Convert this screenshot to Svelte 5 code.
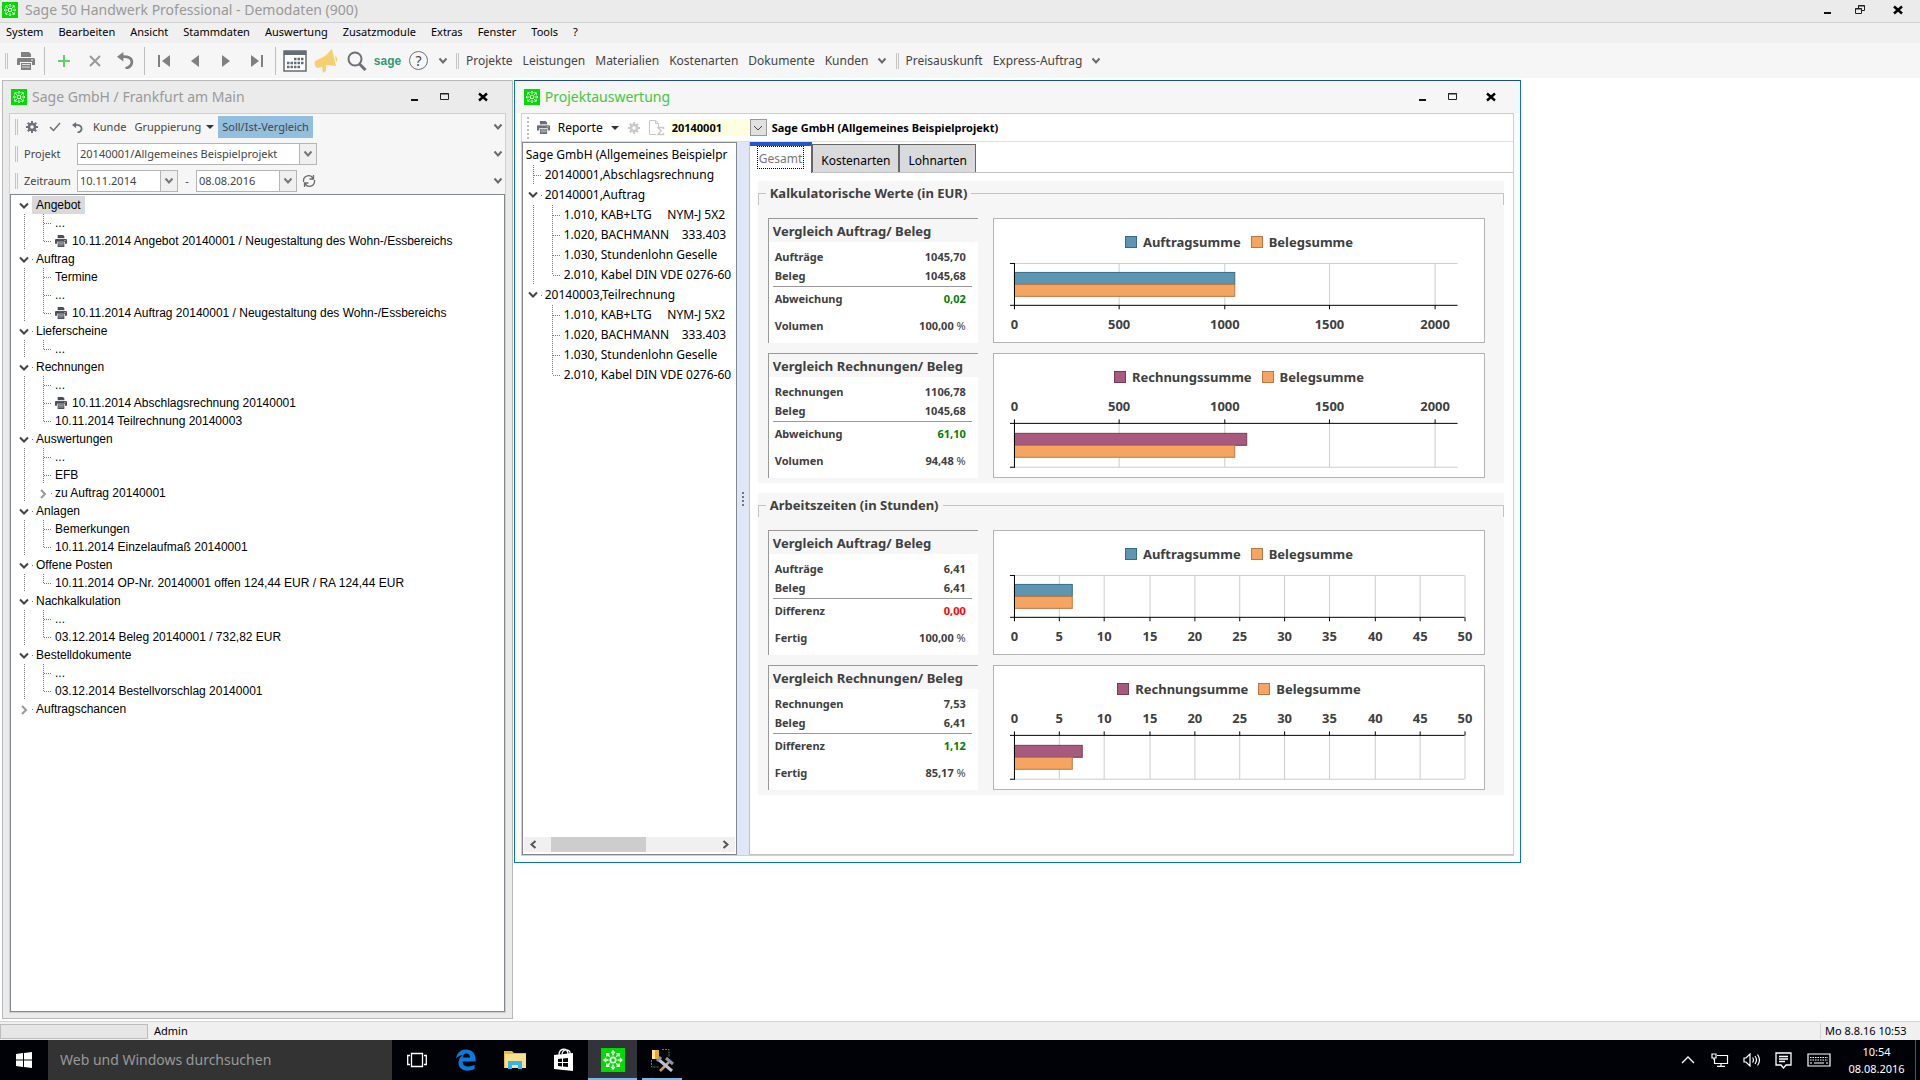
<script lang="ts">
  type Row = { depth: number; text: string; icon?: boolean; node?: 'open' | 'closed'; last?: boolean; selected?: boolean; rail?: boolean };

  const menu = ['System', 'Bearbeiten', 'Ansicht', 'Stammdaten', 'Auswertung', 'Zusatzmodule', 'Extras', 'Fenster', 'Tools', '?'];
  const modules = ['Projekte', 'Leistungen', 'Materialien', 'Kostenarten', 'Dokumente', 'Kunden'];

  const documents: Row[] = [
    { depth: 1, text: 'Angebot', node: 'open', selected: true },
    { depth: 2, text: '...' },
    { depth: 2, text: '10.11.2014 Angebot 20140001 / Neugestaltung des Wohn-/Essbereichs', icon: true, last: true },
    { depth: 1, text: 'Auftrag', node: 'open' },
    { depth: 2, text: 'Termine' },
    { depth: 2, text: '...' },
    { depth: 2, text: '10.11.2014 Auftrag 20140001 / Neugestaltung des Wohn-/Essbereichs', icon: true, last: true },
    { depth: 1, text: 'Lieferscheine', node: 'open' },
    { depth: 2, text: '...', last: true },
    { depth: 1, text: 'Rechnungen', node: 'open' },
    { depth: 2, text: '...' },
    { depth: 2, text: '10.11.2014 Abschlagsrechnung 20140001', icon: true },
    { depth: 2, text: '10.11.2014 Teilrechnung 20140003', last: true },
    { depth: 1, text: 'Auswertungen', node: 'open' },
    { depth: 2, text: '...' },
    { depth: 2, text: 'EFB' },
    { depth: 2, text: 'zu Auftrag 20140001', node: 'closed', last: true },
    { depth: 1, text: 'Anlagen', node: 'open' },
    { depth: 2, text: 'Bemerkungen' },
    { depth: 2, text: '10.11.2014 Einzelaufmaß 20140001', last: true },
    { depth: 1, text: 'Offene Posten', node: 'open' },
    { depth: 2, text: '10.11.2014 OP-Nr. 20140001 offen 124,44 EUR / RA 124,44 EUR', last: true },
    { depth: 1, text: 'Nachkalkulation', node: 'open' },
    { depth: 2, text: '...' },
    { depth: 2, text: '03.12.2014 Beleg 20140001 / 732,82 EUR', last: true },
    { depth: 1, text: 'Bestelldokumente', node: 'open' },
    { depth: 2, text: '...' },
    { depth: 2, text: '03.12.2014 Bestellvorschlag 20140001', last: true },
    { depth: 1, text: 'Auftragschancen', node: 'closed' },
  ];

  const positions: Row[] = [
    { depth: 0, text: 'Sage GmbH (Allgemeines Beispielpr' },
    { depth: 1, text: '20140001,Abschlagsrechnung' },
    { depth: 1, text: '20140001,Auftrag', node: 'open' },
    { depth: 2, text: '1.010, KAB+LTG     NYM-J 5X2' },
    { depth: 2, text: '1.020, BACHMANN    333.403' },
    { depth: 2, text: '1.030, Stundenlohn Geselle' },
    { depth: 2, text: '2.010, Kabel DIN VDE 0276-60', last: true },
    { depth: 1, text: '20140003,Teilrechnung', node: 'open' },
    { depth: 2, text: '1.010, KAB+LTG     NYM-J 5X2', rail: false },
    { depth: 2, text: '1.020, BACHMANN    333.403', rail: false },
    { depth: 2, text: '1.030, Stundenlohn Geselle', rail: false },
    { depth: 2, text: '2.010, Kabel DIN VDE 0276-60', last: true, rail: false },
  ];

  const eur = { end: 2110, width: 445, ticks: [0, 500, 1000, 1500, 2000] };
  const hours = { end: 50, width: 452, ticks: [0, 5, 10, 15, 20, 25, 30, 35, 40, 45, 50] };

  const groups = [
    {
      title: 'Kalkulatorische Werte (in EUR)',
      scale: eur,
      cards: [
        { title: 'Vergleich Auftrag/ Beleg', rows: [['Aufträge', '1045,70'], ['Beleg', '1045,68'], ['Abweichung', '0,02'], ['Volumen', '100,00']], tone: 'good', series: 'Auftragsumme', values: [1045.7, 1045.68], top: false },
        { title: 'Vergleich Rechnungen/ Beleg', rows: [['Rechnungen', '1106,78'], ['Beleg', '1045,68'], ['Abweichung', '61,10'], ['Volumen', '94,48']], tone: 'good', series: 'Rechnungssumme', values: [1106.78, 1045.68], top: true },
      ],
    },
    {
      title: 'Arbeitszeiten (in Stunden)',
      scale: hours,
      cards: [
        { title: 'Vergleich Auftrag/ Beleg', rows: [['Aufträge', '6,41'], ['Beleg', '6,41'], ['Differenz', '0,00'], ['Fertig', '100,00']], tone: 'bad', series: 'Auftragsumme', values: [6.41, 6.41], top: false },
        { title: 'Vergleich Rechnungen/ Beleg', rows: [['Rechnungen', '7,53'], ['Beleg', '6,41'], ['Differenz', '1,12'], ['Fertig', '85,17']], tone: 'good', series: 'Rechnungsumme', values: [7.53, 6.41], top: true },
      ],
    },
  ];

  let tab = $state('Gesamt');
</script>

{#snippet logo(size: number)}
  <svg width={size} height={size} viewBox="0 0 16 16" aria-hidden="true">
    <rect width="16" height="16" fill="#00dc00" />
    <g fill="none" stroke="#fff">
      <circle cx="8" cy="8" r="1.8" stroke-width="1.1" />
      {#each [0, 45, 90, 135, 180, 225, 270, 315] as a}
        <path d="M8 5V2.2M6.7 3.4L8 2l1.3 1.4" stroke-width=".9" transform="rotate({a} 8 8)" />
      {/each}
    </g>
  </svg>
{/snippet}

{#snippet printer(size: number, color: string)}
  <svg width={size} height={size} viewBox="0 0 18 18" aria-hidden="true" fill={color}>
    <path d="M4 0h8l2 2v3H4zM1 6h16l1 1v6h-3v-3H3v3H0V7zM4 11h10v7H4z" />
    <path d="M5 12.5h8M5 15h8M5 5.5h8" stroke="#f6f6f6" stroke-width=".8" />
    <circle cx="15" cy="8" r=".8" fill="#fff" />
  </svg>
{/snippet}

{#snippet chevron(color = '#6b6b6b')}
  <svg width="10" height="8" viewBox="0 0 10 8" aria-hidden="true"><path d="M1.5 1.5L5 5.5l3.5-4" fill="none" stroke={color} stroke-width="2" /></svg>
{/snippet}

{#snippet gear(color: string)}
  <svg width="12" height="12" viewBox="0 0 12 12" aria-hidden="true">
    <circle cx="6" cy="6" r="3" fill="none" stroke={color} stroke-width="2.4" />
    {#each [0, 45, 90, 135, 180, 225, 270, 315] as a}
      <path d="M6 0v2.5" stroke={color} stroke-width="2" transform="rotate({a} 6 6)" />
    {/each}
  </svg>
{/snippet}

{#snippet undo(size: number, color: string)}
  <svg width={size} height={size} viewBox="0 0 16 16" aria-hidden="true">
    <path d="M6 0v9L0 4.5z" fill={color} />
    <path d="M4 4.5c6-.8 10 1 10 5 0 3-2 5-6 6" fill="none" stroke={color} stroke-width="2.6" />
  </svg>
{/snippet}

{#snippet windowButtons(restore = false)}
  <div class="controls" class:wide={restore}>
    <button aria-label="Minimieren"><svg width="12" height="12"><path d="M3 9h7" stroke="#111" stroke-width="2" /></svg></button>
    <button aria-label="Maximieren">
      <svg width="12" height="12" fill="none" stroke="#222">
        {#if restore}
          <path d="M4.500 4V1.500h6v5H8M4 2h7M1.500 4.500h6v5h-6zM1 5h7" />
        {:else}
          <path d="M1.500 2.500h8v6h-8zM1 3h9" />
        {/if}
      </svg>
    </button>
    <button aria-label="Schließen"><svg width="12" height="12"><path d="M2 2.500l8 7M10 2.500l-8 7" stroke="#000" stroke-width="2.400" /></svg></button>
  </div>
{/snippet}

{#snippet tree(rows: Row[])}
  {#each rows as row}
    <li>
      {#if row.depth === 2}
        <svg class="guide">
          {#if row.rail !== false}<line x1="7.5" x2="7.5" y1="0" y2="100%" />{/if}
        </svg>
      {/if}
      {#if row.node}
        <svg class="guide">
          {#if row.node === 'open'}
            <path class="open" d="M3 7.5l4 4 4-4" />
          {:else}
            <path class="closed" d="M5 6l4 4-4 4" />
          {/if}
          <line x1="15" x2="16" y1="50%" y2="50%" />
        </svg>
      {:else if row.depth > 0}
        <svg class="guide">
          <line x1="7.5" x2="7.5" y1="0" y2={row.last ? '50%' : '100%'} />
          <line x1="8" x2="16" y1="50%" y2="50%" />
        </svg>
      {/if}
      {#if row.icon}<span class="doc">{@render printer(12, '#4a4f59')}</span>{/if}
      <span class:selected={row.selected}>{row.text}</span>
    </li>
  {/each}
{/snippet}

<div class="screen">
  <header class="app-title">
    {@render logo(16)}
    <h1>Sage 50 Handwerk Professional - Demodaten (900)</h1>
    {@render windowButtons(true)}
  </header>

  <nav class="menu">
    {#each menu as item}<button>{item}</button>{/each}
  </nav>

  <div class="toolbar">
    <span class="grip"></span>
    <button class="tool" aria-label="Drucken">{@render printer(18, '#808080')}</button>
    <span class="sep"></span>
    <button class="tool" aria-label="Neu"><svg width="14" height="14"><path d="M7 1v12M1 7h12" stroke="#5fd068" stroke-width="2" /></svg></button>
    <button class="tool" aria-label="Löschen"><svg width="12" height="12"><path d="M1 1l10 10M11 1L1 11" stroke="#9a9a9a" stroke-width="2" /></svg></button>
    <button class="tool" aria-label="Rückgängig">{@render undo(17, '#808080')}</button>
    <span class="sep"></span>
    <button class="tool" aria-label="Erster"><svg width="14" height="14" fill="#808080"><path d="M1 1h2v12H1zM13 1v12L5 7z" /></svg></button>
    <button class="tool" aria-label="Zurück"><svg width="14" height="14" fill="#808080"><path d="M11 1v12L3 7z" /></svg></button>
    <button class="tool" aria-label="Weiter"><svg width="14" height="14" fill="#808080"><path d="M3 1v12l8-6z" /></svg></button>
    <button class="tool" aria-label="Letzter"><svg width="14" height="14" fill="#808080"><path d="M1 1v12l8-6zM11 1h2v12h-2z" /></svg></button>
    <span class="sep"></span>
    <button class="tool" aria-label="Kalender">
      <svg width="24" height="22" viewBox="0 0 24 22">
        <path d="M1 1h22v20H1z" fill="#fff" stroke="#666c76" stroke-width="1.5" />
        <path d="M1 1h22v4H1z" fill="#666c76" />
        <path d="M11 9h10M4 13h17M4 17h13" stroke="#666c76" stroke-width="2.5" stroke-dasharray="2.5 1" />
      </svg>
    </button>
    <button class="tool" aria-label="Hinweise">
      <svg width="24" height="24" viewBox="0 0 24 24" fill="#f6cf73">
        <path d="M1 12l10-5 7-7 4 17-9-1-9 3c-3 0-4-5-3-7z" />
        <path d="M8 17l4-1v6l-3 2zM21 7c3 1 3 5 1 6z" />
      </svg>
    </button>
    <button class="tool" aria-label="Suchen"><svg width="20" height="20" fill="none" stroke="#6d6f7a"><circle cx="8" cy="8" r="6.5" stroke-width="2" /><path d="M12.5 13l6 6" stroke-width="3" /></svg></button>
    <button class="tool sage">sage</button>
    <button class="tool" aria-label="Hilfe"><span class="help">?</span></button>
    <button class="more" aria-label="Mehr">{@render chevron()}</button>
    <span class="grip second"></span>
    {#each modules as item}<button class="word">{item}</button>{/each}
    <button class="more" aria-label="Mehr">{@render chevron()}</button>
    <span class="grip second"></span>
    <button class="word">Preisauskunft</button>
    <button class="word">Express-Auftrag</button>
    <button class="more" aria-label="Mehr">{@render chevron()}</button>
  </div>

  <main class="workspace">
    <section class="window project">
      <header class="window-title">
        {@render logo(16)}
        <h2>Sage GmbH / Frankfurt am Main</h2>
        {@render windowButtons()}
      </header>
      <div class="panel">
        <div class="bar first">
          <span class="grip"></span>
          <button class="mini" aria-label="Einstellungen">{@render gear('#6b6f78')}</button>
          <button class="mini" aria-label="Übernehmen"><svg width="12" height="10"><path d="M1 5l3.500 3.500L11 1" fill="none" stroke="#6b6f78" stroke-width="1.5" /></svg></button>
          <button class="mini" aria-label="Rückgängig">{@render undo(11, '#6b6f78')}</button>
          <button class="text">Kunde</button>
          <button class="text">Gruppierung <i class="caret"></i></button>
          <button class="text active">Soll/Ist-Vergleich</button>
          <span class="end">{@render chevron()}</span>
        </div>
        <div class="bar">
          <span class="grip"></span>
          <label class="field" for="projekt">Projekt</label>
          <span class="combo long">
            <select id="projekt"><option>20140001/Allgemeines Beispielprojekt</option></select>
            <span class="drop">{@render chevron('#777')}</span>
          </span>
          <span class="end">{@render chevron()}</span>
        </div>
        <div class="bar">
          <span class="grip"></span>
          <label class="field" for="von">Zeitraum</label>
          <span class="combo">
            <input id="von" value="10.11.2014" />
            <button class="drop" aria-label="Kalender von">{@render chevron('#777')}</button>
          </span>
          <span class="dash">-</span>
          <span class="combo">
            <input aria-label="Zeitraum bis" value="08.08.2016" />
            <button class="drop" aria-label="Kalender bis">{@render chevron('#777')}</button>
          </span>
          <button class="mini" aria-label="Aktualisieren">
            <svg width="14" height="14" fill="none" stroke="#6b6b6b" stroke-width="1.3"><path d="M1.500 8V6.500a5 5 0 0 1 9.500-2M11.500 1v4h-4M12.500 6v1.500a5 5 0 0 1-9.500 2M2.500 13V9h4" /></svg>
          </button>
          <span class="end">{@render chevron()}</span>
        </div>
        <ul class="tree documents">{@render tree(documents)}</ul>
      </div>
    </section>

    <section class="window report">
      <header class="window-title">
        {@render logo(16)}
        <h2>Projektauswertung</h2>
        {@render windowButtons()}
      </header>
      <div class="panel">
        <div class="report-bar">
          <span class="dots"></span>
          <button class="print">{@render printer(13, '#6b6f78')} Reporte <i class="caret"></i></button>
          <button class="mini" aria-label="Einstellungen">{@render gear('#c9c9c9')}</button>
          <button class="mini sum" aria-label="Summen">
            <svg width="16" height="16" fill="none" stroke="#c9c9c9"><path d="M7 14.500H.5V.5h6l3 3V7M6.500.5v3h3" /><path d="M14.500 9V7.500H9l3 3.500-3 3.500h5.500V13" stroke-width="1.5" /></svg>
          </button>
          <input class="number" aria-label="Projektnummer" value="20140001" />
          <button class="pick" aria-label="Projekt wählen"><svg width="10" height="8"><path d="M1 2l4 4 4-4" fill="none" stroke="#444" /></svg></button>
          <strong>Sage GmbH (Allgemeines Beispielprojekt)</strong>
        </div>
        <div class="split">
          <div class="positions-box">
            <ul class="tree positions">{@render tree(positions)}</ul>
            <div class="scroll">
              <svg width="8" height="9"><path d="M6.500 1L2.500 4.500l4 3.500" fill="none" stroke="#555" stroke-width="2" /></svg>
              <span class="track"><span class="thumb"></span></span>
              <svg width="8" height="9"><path d="M1.500 1l4 3.500-4 3.500" fill="none" stroke="#555" stroke-width="2" /></svg>
            </div>
          </div>
          <div class="splitter"><span></span></div>
          <div class="content">
            <div class="tabs" role="tablist">
              {#each ['Gesamt', 'Kostenarten', 'Lohnarten'] as name}
                <button role="tab" aria-selected={tab === name} class:current={tab === name} onclick={() => (tab = name)}><span>{name}</span></button>
              {/each}
            </div>
            <div class="groups">
              {#each groups as group}
                {@const px = group.scale.width / group.scale.end}
                <section class="group">
                  <div class="group-title"><i class="left"></i><h3>{group.title}</h3><i class="right"></i></div>
                  {#each group.cards as card}
                    {@const axis = (card.top ? 39 : 56) + 0.5}
                    {@const far = (card.top ? 83 : 14) + 0.5}
                    {@const bar = (card.top ? 49 : 23) + 0.5}
                    <div class="compare">
                      <div class="card">
                        <h4>{card.title}</h4>
                        <table>
                          <tbody>
                            {#each card.rows as [name, value], i}
                              <tr>
                                <th scope="row">{name}</th>
                                <td class={i === 2 ? card.tone : ''}>{value}{#if i === 3}<span class="percent">&nbsp;%</span>{/if}</td>
                              </tr>
                            {/each}
                          </tbody>
                        </table>
                      </div>
                      <figure>
                        <figcaption>
                          <span class={card.top ? 'key plum' : 'key blue'}></span>{card.series}
                          <span class="key orange"></span>Belegsumme
                        </figcaption>
                        <svg class="plot" viewBox="0 0 492 93">
                          <path class="grid" d="M20 {far}H{20 + group.scale.width}" />
                          {#each group.scale.ticks as t}
                            {@const x = Math.round(20 + t * px) + 0.5}
                            {#if t > 0}<path class="grid" d="M{x} {far}V{axis}" />{/if}
                            <path class="axis" d="M{x} {axis}v{card.top ? -4 : 4}" />
                            <text {x} y={card.top ? 27 : 80}>{t}</text>
                          {/each}
                          <rect class={card.top ? 'plum' : 'blue'} x="20.5" y={bar} width={Math.round(card.values[0] * px)} height="12" />
                          <rect class="orange" x="20.5" y={bar + 12} width={Math.round(card.values[1] * px)} height="12" />
                          <path class="axis" d="M16 {axis}H{20 + group.scale.width}M20.5 {far}V{axis}M16 {far}h5" />
                        </svg>
                      </figure>
                    </div>
                  {/each}
                </section>
              {/each}
            </div>
          </div>
        </div>
      </div>
    </section>
  </main>

  <footer class="status">
    <span class="progress"></span>
    <span>Admin</span>
    <span class="time">Mo 8.8.16 10:53</span>
  </footer>

  <div class="taskbar">
    <button class="start" aria-label="Start"><svg width="16" height="16" fill="#fff"><path d="M0 2l7-1v6.500H0zM8 .9L16 0v7.500H8zM0 8.500h7V15l-7-1zM8 8.500h8V16l-8-1z" /></svg></button>
    <input class="search" aria-label="Suche" placeholder="Web und Windows durchsuchen" />
    <button class="app" aria-label="Taskansicht"><svg width="20" height="16" fill="none" stroke="#fff" stroke-width="1.3"><path d="M4.500 1.500h11v13h-11zM3 3.500H.7v9H3M17 3.500h2.300v9H17" /></svg></button>
    <button class="app" aria-label="Edge">
      <svg width="22" height="22" viewBox="0 0 22 22" fill="#0a7bdc"><path d="M1 9.500C2 3.500 6 .5 11 .5c6 0 9.500 4 9.500 9.500v2.500H7.500c0 3 2.500 5 6 5 2.300 0 4.300-.6 6-1.700v4.300c-2 1.100-4.500 1.700-7 1.700-6 0-9-3.700-9-8 0-3.500 2-6.500 5-7.800C6 6 3 7 1 9.500zm6.700-1h7.300C15 6 13.500 4.500 11.300 4.500 9.300 4.500 8 6 7.700 8.500z" /></svg>
    </button>
    <button class="app" aria-label="Explorer">
      <svg width="22" height="20" viewBox="0 0 22 20"><path d="M0 1h8l2 2h12v15H0z" fill="#e8b93f" /><path d="M1 4h21v14H1z" fill="#fbe08f" /><path d="M4 11h14v8h-4v-4H8v4H4z" fill="#35b6e8" /></svg>
    </button>
    <button class="app" aria-label="Store">
      <svg width="22" height="24" viewBox="0 0 22 24"><path d="M1 7l19-2v18L1 21z" fill="#fff" /><path d="M6 7c0-7 9-8 9-1M9 6c1-6 9-5 8 0" fill="none" stroke="#fff" stroke-width="1.3" /><path d="M5 11l4-.4V14H5zM10 10.500l5-.5v4h-5zM5 15h4v3.500L5 18zM10 15h5v4l-5-.5z" fill="#000208" /></svg>
    </button>
    <button class="app running" aria-label="Sage 50">{@render logo(24)}</button>
    <button class="app open" aria-label="Werkzeuge">
      <svg width="24" height="24" viewBox="0 0 24 24">
        <path d="M2 2h7v9H2z" fill="#e9a92b" /><path d="M2 2h3v9H2z" fill="#ffe58a" />
        <path d="M12 1.500h7v7M1.500 12v7H9" fill="none" stroke="#3f9a3f" stroke-dasharray="2 1" />
        <path d="M10 23l10-10" stroke="#d29a5b" stroke-width="2.5" /><path d="M8 11l14 12" stroke="#b9c3d3" stroke-width="3" /><path d="M16 10l7 6M7 13l4-4" stroke="#8894a8" stroke-width="3" />
      </svg>
    </button>
    <div class="tray">
      <button aria-label="Ausgeblendete Symbole"><svg width="14" height="8"><path d="M1 7l6-6 6 6" fill="none" stroke="#fff" stroke-width="1.3" /></svg></button>
      <button aria-label="Netzwerk"><svg width="18" height="14" fill="none" stroke="#fff" stroke-width="1.2"><path d="M6 2.500h10.500v8H3.500V6M10 10.500V13M6 13.400h8M1 1h4v4H1zM3 5v2" /></svg></button>
      <button aria-label="Lautstärke"><svg width="18" height="14" fill="none" stroke="#fff" stroke-width="1.2"><path d="M1 5h2l4-4v12L3 9H1zM9.500 4.500q2 2.500 0 5M12 3q3 4 0 8M14.500 1.500q4 5.500 0 11" /></svg></button>
      <button aria-label="Info-Center"><svg width="18" height="17" fill="none" stroke="#fff" stroke-width="1.3"><path d="M1 1h15v12h-5l-2.500 3L6 13H1zM4 4.500h9M4 7h9M4 9.500h6" /></svg></button>
      <button class="keys" aria-label="Tastatur"><svg width="24" height="14" fill="none" stroke="#fff" stroke-width="1.2"><path d="M1 1h22v12H1z" /><path d="M3 4.500h18M3 7h18" stroke-dasharray="1.5 1" /><path d="M3 10h2M7 10h10M19 10h2" /></svg></button>
      <time>10:54<br />08.08.2016</time>
    </div>
  </div>
</div>

<style>
  :global(body) {
    margin: 0;
    background: #fff;
  }

  .screen {
    --ui: 'Noto Sans', 'Open Sans', sans-serif;
    display: flex;
    flex-direction: column;
    min-height: 100vh;
    font: 11px/16px var(--ui);
    color: #000;
  }

  .screen *,
  .screen {
    box-sizing: border-box;
  }

  button,
  input,
  select {
    margin: 0;
    padding: 0;
    border: 0;
    border-radius: 0;
    background: none;
    font: inherit;
    color: inherit;
    outline: none;
  }

  h1, h2, h3, h4, figure, ul {
    margin: 0;
    padding: 0;
  }

  svg {
    display: block;
    flex: none;
  }

  /* frame */
  .app-title {
    display: flex;
    align-items: center;
    gap: 7px;
    height: 23px;
    padding-left: 2px;
    padding-bottom: 3px;
    background: #ebebeb;
    border-bottom: 1px solid #d2d2d2;
  }

  h1, h2 {
    font-size: 14px;
    line-height: 18px;
    font-weight: 400;
    color: #999;
    white-space: nowrap;
  }

  .controls {
    display: flex;
    margin-left: auto;
  }

  .controls button {
    width: 34px;
    height: 20px;
    display: grid;
    place-items: center;
  }

  .controls button:first-child {
    width: 28px;
  }

  .controls button:last-child {
    width: 42px;
  }

  .controls.wide {
    padding-right: 3px;
  }

  .controls.wide button {
    width: 38px;
  }

  .controls.wide button:first-child {
    width: 28px;
  }

  .menu {
    display: flex;
    gap: 15px;
    height: 20px;
    padding: 0 0 2px 6px;
    background: #f0f0f0;
  }

  .toolbar {
    display: flex;
    align-items: center;
    height: 35px;
    padding-left: 5px;
    background: #f6f6f6;
    color: #444;
    font-size: 12px;
  }

  .grip {
    width: 3px;
    height: 16px;
    margin-right: 2px;
    border: solid #c4c4c4;
    border-width: 0 1px;
    flex: none;
  }

  .grip.second {
    margin-left: 5px;
  }

  .tool {
    width: 31px;
    display: grid;
    place-items: center;
  }

  .sep {
    width: 1px;
    height: 28px;
    margin: 0 3px;
    background: #bdbdbd;
  }

  .sage {
    font: bold 12px/16px 'Liberation Sans', sans-serif;
    color: #2e9a72;
  }

  .help {
    width: 19px;
    height: 19px;
    border: 1px solid #6b6f78;
    border-radius: 50%;
    line-height: 17px;
    font-size: 14px;
    text-align: center;
  }

  .more {
    width: 17px;
    display: grid;
    place-items: center;
  }

  .word {
    padding: 0 5px;
  }

  /* child windows */
  .workspace {
    flex: 1;
    display: grid;
    grid-template-columns: 511fr 1008fr 398fr;
    column-gap: 1px;
    padding: 2px 0 2px 2px;
  }

  .window {
    display: flex;
    flex-direction: column;
    min-width: 0;
  }

  .project {
    background: #ebebeb;
    border: 1px solid #b9b9b9;
    padding: 0 6px 5px;
  }

  .report {
    margin-bottom: 156px;
    padding: 0 6px 6px;
    background: #fcfcfc;
    border: 1px solid #0a74be;
    border-top-color: #1e4a90;
  }

  .report .window-title {
    margin: 0 -6px;
    padding-left: 9px;
    background: #f6f6f6;
  }

  .report h2 {
    color: #3fc93f;
  }

  .window-title {
    display: flex;
    align-items: center;
    gap: 5px;
    height: 32px;
    padding-left: 2px;
  }

  .report .controls {
    padding-right: 8px;
  }

  .project .controls {
    padding-right: 2px;
  }

  .panel {
    flex: 1;
    display: flex;
    flex-direction: column;
    border: 1px solid #cfcfcf;
    background: #f6f6f6;
    min-width: 0;
  }

  .bar {
    display: flex;
    align-items: center;
    height: 27px;
    padding-left: 5px;
    color: #444;
  }

  .bar.first {
    height: 26px;
  }

  .mini {
    width: 23px;
    display: grid;
    place-items: center;
  }

  .text {
    display: flex;
    align-items: center;
    height: 22px;
    padding: 0 4px;
    white-space: nowrap;
  }

  .active {
    background: #92bee0;
  }

  .caret {
    border: solid transparent;
    border-width: 4px 4px 0;
    border-top-color: #333;
    margin-left: 5px;
  }

  .end {
    margin-left: auto;
    padding-right: 2px;
  }

  .field {
    width: 57px;
    padding-left: 4px;
  }

  .combo {
    display: flex;
    width: 101px;
    height: 22px;
    border: 1px solid #b5b5b5;
    background: #fff;
  }

  .combo.long {
    width: 240px;
  }

  .combo input,
  .combo select {
    flex: 1;
    width: 0;
    padding-left: 2px;
    appearance: none;
  }

  .drop {
    display: grid;
    place-items: center;
    width: 17px;
    border-left: 1px solid #b5b5b5;
    background: #f0f0f0;
    pointer-events: none;
  }

  .dash {
    width: 18px;
    text-align: center;
  }

  /* trees */
  .tree {
    list-style: none;
    background: #fff;
    white-space: pre;
    overflow: hidden;
  }

  .tree li {
    display: flex;
    align-items: center;
  }

  .documents {
    flex: 1;
    padding: 1px 6px;
    border: 1px solid #828790;
    font: 12px/16px 'Liberation Sans', Arial, sans-serif;
  }

  .documents li,
  .documents .guide {
    height: 18px;
  }

  .guide {
    width: 19px;
    fill: none;
    shape-rendering: crispEdges;
  }

  .guide line {
    stroke: #777;
    stroke-dasharray: 1 1;
  }

  .guide .open {
    stroke: #444;
    stroke-width: 2;
    shape-rendering: auto;
  }

  .guide .closed {
    stroke: #999;
    stroke-width: 2;
    shape-rendering: auto;
  }

  .doc {
    width: 17px;
  }

  .selected {
    margin-left: -4px;
    padding: 1px 4px;
    background: #d9d9d9;
  }

  .positions-box {
    flex: 0 0 215px;
    display: flex;
    flex-direction: column;
    border: 1px solid #828790;
    background: #fff;
    min-width: 0;
    padding: 1px 1px 2px;
  }

  .positions {
    flex: 1;
    padding: 1px 0 0 2px;
    font-size: 12px;
  }

  .positions li,
  .positions .guide {
    height: 20px;
  }

  .scroll {
    display: flex;
    align-items: center;
    height: 15px;
    padding: 0 5px;
    background: #f0f0f0;
  }

  .track {
    flex: 1;
    height: 15px;
    padding: 0 76px 0 14px;
  }

  .thumb {
    display: block;
    height: 15px;
    background: #cdcdcd;
  }

  /* report */
  .report .panel {
    background: #fff;
  }

  .report-bar {
    display: flex;
    align-items: center;
    height: 28px;
    padding-left: 5px;
    border-bottom: 1px solid #ddd;
    font-size: 12px;
  }

  .report-bar .mini {
    width: 21px;
  }

  .report-bar .sum {
    width: 25px;
  }

  .dots {
    height: 22px;
    border-left: 2px dotted #bbb;
    margin-right: 8px;
  }

  .print {
    display: flex;
    align-items: center;
    gap: 8px;
    padding-right: 5px;
  }

  .print .caret {
    margin-left: 0;
  }

  .report-bar .number {
    width: 80px;
    height: 17px;
    padding-left: 2px;
    background: #ffffdf;
    font-weight: 700;
    font-size: 11px;
  }

  .pick {
    display: grid;
    place-items: center;
    width: 17px;
    height: 17px;
    border: 1px solid #999;
    background: #e1e1e1;
  }

  .report-bar strong {
    margin-left: 5px;
    font-size: 11px;
  }

  .split {
    flex: 1;
    display: flex;
    min-height: 0;
  }

  .splitter {
    width: 12px;
    display: grid;
    place-items: center;
    background: #dfe6f5;
  }

  .splitter span {
    height: 14px;
    border-left: 2px dotted #777;
  }

  .content {
    flex: 1;
    min-width: 0;
    border-left: 1px solid #c3c3c3;
    border-bottom: 1px solid #c3c3c3;
  }

  .tabs {
    display: flex;
    align-items: flex-end;
    height: 31px;
    border-bottom: 1px solid #c3c3c3;
    font-size: 12px;
  }

  .tabs button {
    height: 28px;
    padding: 4px 8px 0;
    border: 1px solid #666;
    border-bottom: 0;
    background: #d9dadb;
  }

  .tabs .current {
    height: 31px;
    margin-bottom: -1px;
    padding: 0 7px 4px;
    border-top: 4px solid #2456c6;
    border-left: 0;
    background: #fff;
    color: #777;
  }

  .current span {
    display: block;
    padding: 4px 1px 1px;
    border: 1px dotted #000;
  }

  .groups {
    display: flex;
    flex-direction: column;
    gap: 10px;
    padding: 8px 9px 0 8px;
    color: #404040;
    font-weight: 700;
  }

  .group {
    padding-bottom: 5px;
    background: #f6f6f6;
  }

  .group-title {
    display: flex;
    align-items: flex-end;
    gap: 4px;
    height: 24px;
    margin-bottom: 13px;
  }

  .group-title h3 {
    font-size: 13px;
    line-height: 24px;
  }

  .group-title i {
    height: 12px;
    border-top: 1px solid #c3c3c3;
  }

  .group-title .left {
    width: 8px;
    border-left: 1px solid #c3c3c3;
  }

  .group-title .right {
    flex: 1;
    border-right: 1px solid #c3c3c3;
  }

  .compare {
    display: flex;
    gap: 15px;
    height: 125px;
    margin: 0 19px 10px 10px;
  }

  .compare:last-child {
    margin-bottom: 0;
  }

  .card {
    width: 210px;
    background: #fff;
    border: solid #999;
    border-width: 1px 0 0 1px;
  }

  .card h4 {
    height: 23px;
    padding-left: 4px;
    background: #f6f6f6;
    font-size: 13px;
    line-height: 24px;
  }

  .card table {
    width: 199px;
    margin: 6px 0 0 4px;
    border-collapse: collapse;
  }

  .card th,
  .card td {
    height: 18px;
    padding: 0 2px;
    text-align: left;
  }

  .card td {
    padding-right: 6px;
    text-align: right;
  }

  .card tr:nth-child(2) > * {
    height: 20px;
  }

  .card tr:nth-child(3) > * {
    height: 26px;
    border-top: 1px solid #999;
  }

  .card tr:nth-child(4) > * {
    height: 28px;
  }

  .percent {
    font-weight: 400;
  }

  .good {
    color: #008000;
  }

  .bad {
    color: #f00;
  }

  figure {
    flex: 1;
    min-width: 0;
    border: 1px solid #b4b4b4;
    background: #fff;
  }

  figcaption {
    display: flex;
    justify-content: center;
    align-items: center;
    height: 14px;
    margin-top: 16px;
    font-size: 13px;
  }

  .key {
    width: 12px;
    height: 12px;
    margin: 0 6px 0 10px;
    border: 1px solid;
  }

  .key:first-child {
    margin-left: 0;
  }

  .blue {
    background: #5d96b2;
    fill: #5d96b2;
    stroke: #386c85;
    border-color: #386c85;
  }

  .plum {
    background: #a75a7d;
    fill: #a75a7d;
    stroke: #793b58;
    border-color: #793b58;
  }

  .orange {
    background: #f5a462;
    fill: #f5a462;
    stroke: #b97843;
    border-color: #b97843;
  }

  .plot {
    width: 100%;
  }

  .plot text {
    fill: #404040;
    font-size: 13px;
    text-anchor: middle;
  }

  .grid {
    fill: none;
    stroke: #ccc;
  }

  .axis {
    fill: none;
    stroke: #000;
  }

  /* status and taskbar */
  .status {
    display: flex;
    align-items: center;
    gap: 6px;
    height: 19px;
    background: #f0f0f0;
    border-top: 1px solid #d5d5d5;
  }

  .progress {
    width: 148px;
    height: 15px;
    border: 1px solid #bcbcbc;
    background: #e6e6e6;
  }

  .time {
    margin-left: auto;
    width: 100px;
    padding-left: 4px;
    border-left: 1px solid #d5d5d5;
  }

  .taskbar {
    display: flex;
    height: 40px;
    background: #000208;
    color: #fff;
  }

  .start {
    width: 48px;
    display: grid;
    place-items: center;
  }

  .search {
    width: 344px;
    padding-left: 12px;
    background: #333;
    font-size: 14px;
  }

  .search::placeholder {
    color: #999;
  }

  .app {
    width: 49px;
    display: grid;
    place-items: center;
    border: solid transparent;
    border-width: 2px 0;
  }

  .running {
    background: #33343a;
    border-bottom-color: #76b9ed;
  }

  .open.app {
    width: 40px;
    margin-left: 5px;
    border-bottom-color: #76b9ed;
  }

  .tray {
    display: flex;
    align-items: center;
    margin-left: auto;
    margin-right: 4px;
    border-right: 1px solid #555;
  }

  .tray button {
    width: 32px;
    display: grid;
    place-items: center;
  }

  .tray .keys {
    width: 38px;
  }

  .tray time {
    width: 77px;
    text-align: center;
    line-height: 17px;
  }
</style>
